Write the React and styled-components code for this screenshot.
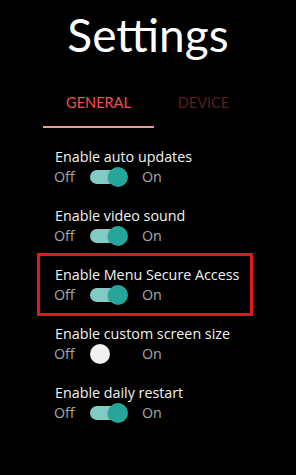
import React, { useState } from "react";
import styled, { createGlobalStyle } from "styled-components";

const Global = createGlobalStyle`
  html, body { margin: 0; padding: 0; background: #000; }
  body { font-family: "Open Sans", "Noto Sans", sans-serif; color: #fff; }
`;

const Page = styled.div`
  width: 296px;
  height: 475px;
  background: #000;
  display: flex;
  flex-direction: column;
  align-items: stretch;
`;

const Title = styled.h1`
  margin: 0;
  padding-top: 9px;
  height: 68px;
  box-sizing: border-box;
  text-align: center;
  font-family: "Lato", sans-serif;
  font-weight: 400;
  font-size: 46px;
  line-height: 52px;
  color: #fff;
`;

const Tabs = styled.div`
  display: flex;
  margin: 15px 0 0 43px;
  height: 45px;
  box-sizing: border-box;
`;

const Tab = styled.div`
  width: ${(p) => p.$w}px;
  box-sizing: border-box;
  display: flex;
  justify-content: center;
  padding-top: 11px;
  font-family: "Lato", sans-serif;
  font-size: 14.5px;
  line-height: 18px;
  color: ${(p) => (p.$active ? "#ef5350" : "#5a1f1f")};
  border-bottom: 2px solid ${(p) => (p.$active ? "#ef9a9a" : "transparent")};
`;

const List = styled.div`
  display: flex;
  flex-direction: column;
  margin: 9px 0 0 39px;
  width: 212px;
`;

const Row = styled.div`
  padding: 10px 16px 9px;
  outline: ${(p) => (p.$highlight ? "3px solid #e3161d" : "none")};
  outline-offset: -1px;
`;

const Label = styled.div`
  font-size: 14.3px;
  line-height: 20px;
  color: #f2f2f2;
  white-space: nowrap;
`;

const Controls = styled.div`
  display: flex;
  align-items: center;
  height: 20px;
  margin-left: -1px;
`;

const State = styled.span`
  font-size: 14.3px;
  line-height: 20px;
  color: #a8a8a8;
  width: ${(p) => p.$w || "auto"};
`;

const SwitchBox = styled.button`
  position: relative;
  width: 40px;
  height: 20px;
  padding: 0;
  margin: 0 12px 0 0;
  border: none;
  background: none;
  cursor: pointer;
`;

const Track = styled.span`
  position: absolute;
  left: 0;
  top: 3px;
  width: 34px;
  height: 14px;
  border-radius: 7px;
  background: ${(p) => (p.$on ? "#80cbc4" : "#000")};
`;

const Thumb = styled.span`
  position: absolute;
  top: 0;
  left: ${(p) => (p.$on ? "18px" : "0")};
  width: 20px;
  height: 20px;
  border-radius: 50%;
  background: ${(p) => (p.$on ? "#26a69a" : "#f1f1f1")};
  box-shadow: 0 1px 2px rgba(0, 0, 0, 0.4);
`;

const items = [
  { label: "Enable auto updates", on: true },
  { label: "Enable video sound", on: true },
  { label: "Enable Menu Secure Access", on: true, highlight: true },
  { label: "Enable custom screen size", on: false },
  { label: "Enable daily restart", on: true },
];

function Toggle({ on, onClick }) {
  return (
    <SwitchBox onClick={onClick} aria-pressed={on}>
      <Track $on={on} />
      <Thumb $on={on} />
    </SwitchBox>
  );
}

export default function App() {
  const [vals, setVals] = useState(items.map((i) => i.on));
  return (
    <Page>
      <Global />
      <Title>Settings</Title>
      <Tabs>
        <Tab $active $w={111}>GENERAL</Tab>
        <Tab $w={99}>DEVICE</Tab>
      </Tabs>
      <List>
        {items.map((it, i) => (
          <Row key={it.label} $highlight={it.highlight}>
            <Label>{it.label}</Label>
            <Controls>
              <State $w="36px">Off</State>
              <Toggle
                on={vals[i]}
                onClick={() => setVals((v) => v.map((x, j) => (j === i ? !x : x)))}
              />
              <State>On</State>
            </Controls>
          </Row>
        ))}
      </List>
    </Page>
  );
}
